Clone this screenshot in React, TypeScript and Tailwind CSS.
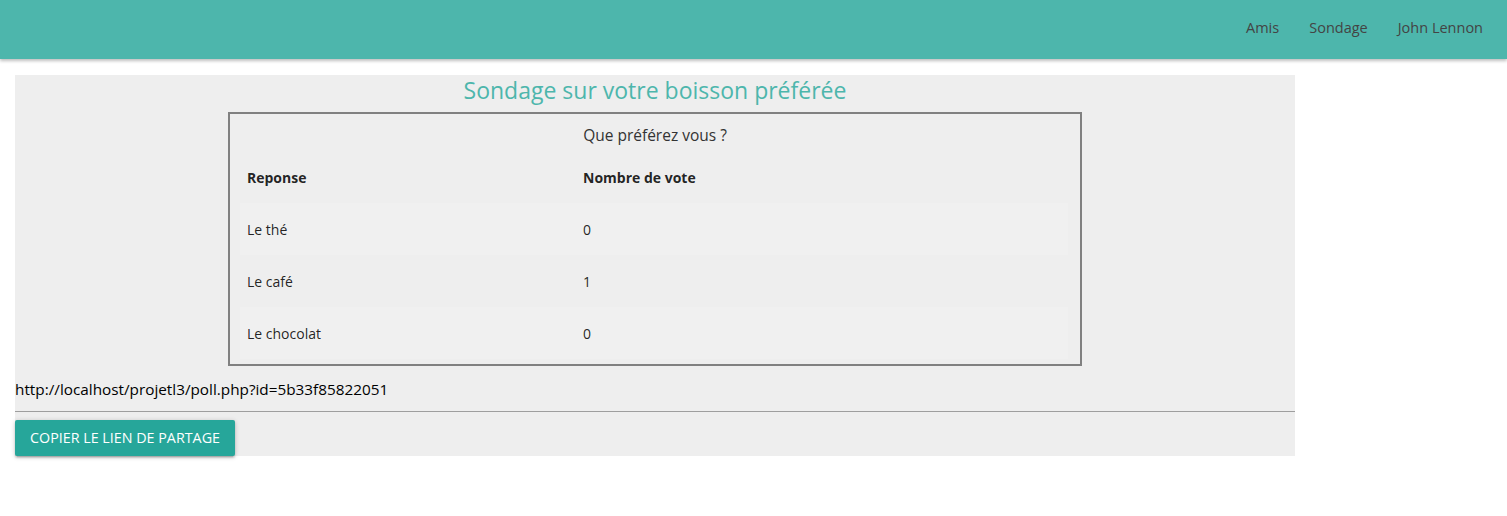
import React from "react";

const rows = [
  { r: "Le thé", n: "0", striped: true },
  { r: "Le café", n: "1", striped: false },
  { r: "Le chocolat", n: "0", striped: true },
];

export default function App() {
  return (
    <div
      className="min-h-[516px] bg-white text-[rgba(0,0,0,0.87)]"
      style={{ fontFamily: '"Open Sans", "Noto Sans", sans-serif' }}
    >
      <nav className="h-[59px] bg-[#4db6ac] shadow-[0_2px_3px_rgba(0,0,0,0.25)] flex items-center justify-end pr-[9px] pb-[4px]">
        <ul className="flex items-center">
          {["Amis", "Sondage", "John Lennon"].map((t) => (
            <li key={t}>
              <a className="block px-[15px] text-[14.5px] text-[#444] leading-[20px]">{t}</a>
            </li>
          ))}
        </ul>
      </nav>

      <div className="mt-[16px] ml-[15px] w-[1280px] bg-[#eeeeee] flex flex-col">
        <h2 className="text-center text-[23px] leading-[30px] text-[#4db6ac]">
          Sondage sur votre boisson préférée
        </h2>
        <div className="mx-auto mt-[7px] w-[854px] h-[254px] border-2 border-[#808080] flex flex-col">
          <p className="text-center text-[15.5px] leading-[20px] mt-[11px] text-[#333]">Que préférez vous ?</p>
          <table className="ml-[10px] w-[828px] mt-[7px] text-[14px] border-collapse">
            <thead>
              <tr className="h-[51px]">
                <th className="text-left font-bold pl-[7px] w-[336px]">Reponse</th>
                <th className="text-left font-bold pl-[7px]">Nombre de vote</th>
              </tr>
            </thead>
            <tbody>
              {rows.map((row) => (
                <tr key={row.r} className={`h-[52px] ${row.striped ? "bg-[#f0f0f0]" : ""}`}>
                  <td className="pl-[7px]">{row.r}</td>
                  <td className="pl-[7px]">{row.n}</td>
                </tr>
              ))}
            </tbody>
          </table>
        </div>
        <p className="mt-[13px] text-[15.3px] leading-[20px] text-black">
          http://localhost/projetl3/poll.php?id=5b33f85822051
        </p>
        <hr className="mt-[12px] border-0 border-t border-[#9e9e9e]" />
        <div className="mt-[8px]">
          <button className="h-[36px] w-[220px] bg-[#26a69a] text-white text-[14.3px] uppercase rounded-[2px] shadow-[0_2px_2px_rgba(0,0,0,0.14),0_3px_1px_-2px_rgba(0,0,0,0.12),0_1px_5px_rgba(0,0,0,0.2)]">
            Copier le lien de partage
          </button>
        </div>
      </div>
    </div>
  );
}
